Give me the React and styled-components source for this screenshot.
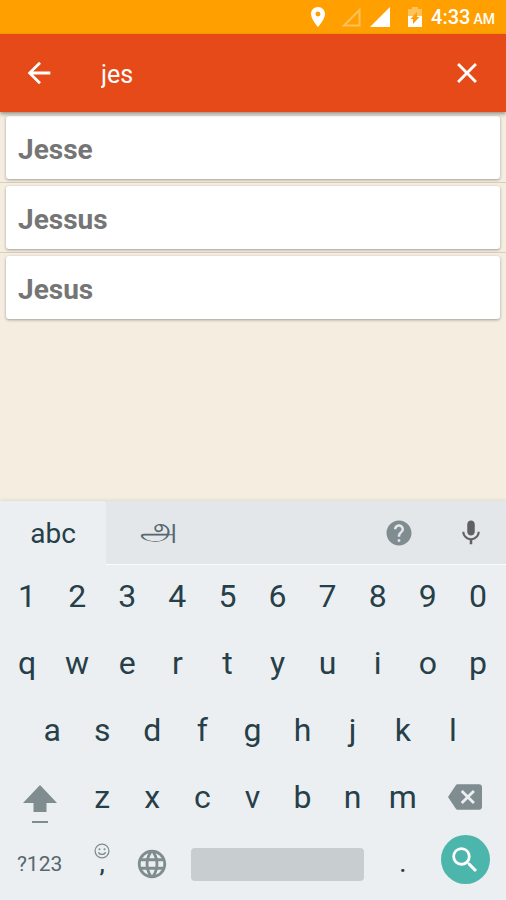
import React, { useState } from "react";
import styled, { createGlobalStyle } from "styled-components";
import {
  MdArrowBack,
  MdClose,
  MdLocationOn,
  MdHelp,
  MdMic,
  MdBackspace,
  MdLanguage,
  MdSearch,
} from "react-icons/md";

const GlobalStyle = createGlobalStyle`
  * {
    box-sizing: border-box;
  }

  body {
    margin: 0;
    font-family: Roboto, "Noto Sans", sans-serif;
    background-color: #f5ede0;
  }

  button,
  input {
    font-family: inherit;
    border: none;
    padding: 0;
    margin: 0;
    background: none;
  }

  button {
    cursor: pointer;
  }

  svg {
    display: block;
    flex-shrink: 0;
  }
`;

const Screen = styled.div`
  display: flex;
  flex-direction: column;
  min-height: 100vh;
`;

const StatusBar = styled.div`
  display: flex;
  justify-content: flex-end;
  align-items: center;
  height: 34px;
  padding-right: 11px;
  background-color: #ffa000;
  color: #fff;
`;

const StatusIcons = styled.div`
  display: flex;
  align-items: center;
  margin-right: 9px;
`;

const Signals = styled.div`
  display: flex;
  gap: 9px;
  margin: 0 18px 0 11px;
`;

const Clock = styled.div`
  padding-top: 2px;
  font-size: 20px;
  font-weight: 500;
  line-height: 32px;
`;

const Meridiem = styled.span`
  margin-left: 3px;
  font-size: 14px;
`;

const Header = styled.header`
  position: relative;
  display: flex;
  align-items: center;
  height: 78px;
  padding: 0 22px;
  background-color: #e64a19;
  color: #fff;
  box-shadow: 0 2px 4px rgba(0, 0, 0, 0.4);
`;

const HeaderButton = styled.button`
  color: inherit;
  font-size: 34px;
`;

const SearchInput = styled.input`
  flex: 1;
  min-width: 0;
  margin: 0 16px 0 45px;
  padding-top: 4px;
  color: #fff;
  font-size: 25px;
  line-height: 32px;
  outline: none;
`;

const Results = styled.ul`
  flex: 1;
  margin: 0;
  padding: 1px 0 0;
  list-style: none;
`;

const ResultRow = styled.li`
  padding: 3px 6px;
  border-bottom: 1px solid #d6cec3;

  &:last-child {
    border-bottom: none;
  }
`;

const ResultCard = styled.button`
  display: block;
  width: 100%;
  height: 63px;
  padding: 3px 12px 0;
  border-radius: 3px;
  background-color: #fff;
  color: #757575;
  font-size: 28px;
  font-weight: 700;
  text-align: left;
  box-shadow: 0 1px 3px rgba(0, 0, 0, 0.35);
`;

const Keyboard = styled.section`
  position: relative;
  background-color: #eceff1;
  color: #263f49;
  box-shadow: 0 0 4px rgba(0, 0, 0, 0.14);
`;

const TabBar = styled.div`
  display: flex;
  height: 64px;
  background-color: #e3e7e9;
`;

const Tab = styled.button`
  width: 21%;
  padding-top: 2px;
  color: ${(props) => (props.$active ? "#263f49" : "#56676f")};
  background-color: ${(props) => (props.$active ? "#eceff1" : "transparent")};
  border-bottom: 1px solid ${(props) => (props.$active ? "#eceff1" : "#fafbfc")};
  border-top-right-radius: 3px;
  font-size: 28px;

  &:lang(ta) {
    padding: 0 0 10px;
    font-size: 34px;
    line-height: 40px;
  }
`;

const TabActions = styled.div`
  flex: 1;
  display: flex;
  justify-content: flex-end;
  align-items: center;
  gap: 42px;
  padding-right: 20px;
  border-bottom: 1px solid #fafbfc;
`;

const TabAction = styled.button`
  color: ${(props) => props.$color};
  font-size: 30px;
`;

const Keys = styled.div`
  display: flex;
  flex-direction: column;
  gap: 5px;
  padding: 0 3px 5px 2px;
`;

const KeyRow = styled.div`
  display: flex;
  height: 62px;
`;

const Key = styled.button`
  flex: ${(props) => props.$span || 1} 1 0;
  min-width: 0;
  display: flex;
  justify-content: center;
  align-items: center;
  color: #263f49;
  font-size: 32px;
`;

const HalfKey = styled.div`
  flex: 0.5 1 0;
`;

const IconKey = styled(Key)`
  color: #7f8c90;
  font-size: 34px;
`;

const ShiftKey = styled(IconKey)`
  align-items: flex-end;
  padding-bottom: 5px;
`;

const SymbolKey = styled(Key)`
  color: #56676f;
  font-size: 21px;
`;

const PunctuationKey = styled(Key)`
  position: relative;
  font-size: 24px;
  font-weight: 500;
`;

const KeyHint = styled.span`
  position: absolute;
  top: 10px;
  left: 0;
  right: 0;
  display: flex;
  justify-content: center;
`;

const SpaceBar = styled.span`
  flex: 1;
  height: 33px;
  margin: 0 14px;
  border-radius: 4px;
  background-color: #c8cdd0;
`;

const SearchKey = styled(Key)`
  align-items: flex-start;
  padding-top: 2px;
`;

const SearchCircle = styled.span`
  display: flex;
  justify-content: center;
  align-items: center;
  width: 49px;
  height: 49px;
  border-radius: 50%;
  background-color: #4db6ac;
  color: #fff;
  font-size: 34px;
`;

const SignalIcon = ({ full }) => (
  <svg width="20" height="20" viewBox="0 0 20 20">
    {full ? (
      <path d="M20 0v20H0z" fill="#fff" />
    ) : (
      <path
        d="M18.5 3v15.5H3z"
        fill="none"
        stroke="#fff"
        strokeOpacity="0.35"
        strokeWidth="2"
      />
    )}
  </svg>
);

const BatteryIcon = () => (
  <svg width="14" height="20" viewBox="0 0 14 20">
    <path d="M4 0h6v2h4v7H0V2h4z" fill="#fff" fillOpacity="0.35" />
    <path d="M0 9h14v11H0z" fill="#fff" />
    <path d="M9 5v5h2.500L5 17v-5H2.500z" fill="#ffa000" />
  </svg>
);

const ShiftIcon = () => (
  <svg width="34" height="38" viewBox="0 0 34 38">
    <path d="M17 0l17 18H23.500v9h-13v-9H0z" fill="currentColor" />
    <path d="M9 36h16v2H9z" fill="currentColor" />
  </svg>
);

const SmileIcon = () => (
  <svg width="16" height="16" viewBox="0 0 16 16">
    <g fill="none" stroke="#7f8c90" strokeWidth="1.300">
      <circle cx="8" cy="8" r="6.900" />
      <path d="M4.500 9.200c1 3 6 3 7 0" />
    </g>
    <circle cx="5.500" cy="6.200" r="1" fill="#7f8c90" />
    <circle cx="10.500" cy="6.200" r="1" fill="#7f8c90" />
  </svg>
);

const names = ["Jesse", "Jessus", "Jesus"];

export default function App() {
  const [query, setQuery] = useState("jes");
  const [tab, setTab] = useState("abc");

  const type = (char) => setQuery(query + char);
  const results = names.filter((name) =>
    name.toLowerCase().startsWith(query.toLowerCase())
  );

  const renderKeys = (chars) =>
    chars.split("").map((char) => (
      <Key key={char} type="button" onClick={() => type(char)}>
        {char}
      </Key>
    ));

  return (
    <Screen>
      <GlobalStyle />
      <StatusBar>
        <StatusIcons>
          <MdLocationOn size={24} />
          <Signals>
            <SignalIcon />
            <SignalIcon full />
          </Signals>
          <BatteryIcon />
        </StatusIcons>
        <Clock>
          4:33<Meridiem>AM</Meridiem>
        </Clock>
      </StatusBar>

      <Header>
        <HeaderButton type="button" aria-label="Back">
          <MdArrowBack />
        </HeaderButton>
        <SearchInput
          type="text"
          aria-label="Search"
          value={query}
          onChange={(e) => setQuery(e.target.value)}
        />
        <HeaderButton
          type="button"
          aria-label="Clear"
          onClick={() => setQuery("")}
        >
          <MdClose />
        </HeaderButton>
      </Header>

      <Results>
        {results.map((name) => (
          <ResultRow key={name}>
            <ResultCard type="button">{name}</ResultCard>
          </ResultRow>
        ))}
      </Results>

      <Keyboard>
        <TabBar>
          <Tab
            type="button"
            $active={tab === "abc"}
            onClick={() => setTab("abc")}
          >
            abc
          </Tab>
          <Tab
            type="button"
            lang="ta"
            $active={tab === "ta"}
            onClick={() => setTab("ta")}
          >
            அ
          </Tab>
          <TabActions>
            <TabAction type="button" aria-label="Help" $color="#7f8c90">
              <MdHelp />
            </TabAction>
            <TabAction type="button" aria-label="Voice" $color="#616161">
              <MdMic />
            </TabAction>
          </TabActions>
        </TabBar>
        <Keys>
          <KeyRow>{renderKeys("1234567890")}</KeyRow>
          <KeyRow>{renderKeys("qwertyuiop")}</KeyRow>
          <KeyRow>
            <HalfKey />
            {renderKeys("asdfghjkl")}
            <HalfKey />
          </KeyRow>
          <KeyRow>
            <ShiftKey type="button" aria-label="Shift" $span={1.5}>
              <ShiftIcon />
            </ShiftKey>
            {renderKeys("zxcvbnm")}
            <IconKey
              type="button"
              aria-label="Backspace"
              $span={1.5}
              onClick={() => setQuery(query.slice(0, -1))}
            >
              <MdBackspace />
            </IconKey>
          </KeyRow>
          <KeyRow>
            <SymbolKey type="button" $span={1.5}>
              ?123
            </SymbolKey>
            <PunctuationKey type="button" onClick={() => type(",")}>
              <KeyHint>
                <SmileIcon />
              </KeyHint>
              ,
            </PunctuationKey>
            <IconKey type="button" aria-label="Language">
              <MdLanguage />
            </IconKey>
            <Key
              type="button"
              aria-label="Space"
              $span={4}
              onClick={() => type(" ")}
            >
              <SpaceBar />
            </Key>
            <PunctuationKey type="button" onClick={() => type(".")}>
              .
            </PunctuationKey>
            <SearchKey type="button" aria-label="Search" $span={1.5}>
              <SearchCircle>
                <MdSearch />
              </SearchCircle>
            </SearchKey>
          </KeyRow>
        </Keys>
      </Keyboard>
    </Screen>
  );
}
